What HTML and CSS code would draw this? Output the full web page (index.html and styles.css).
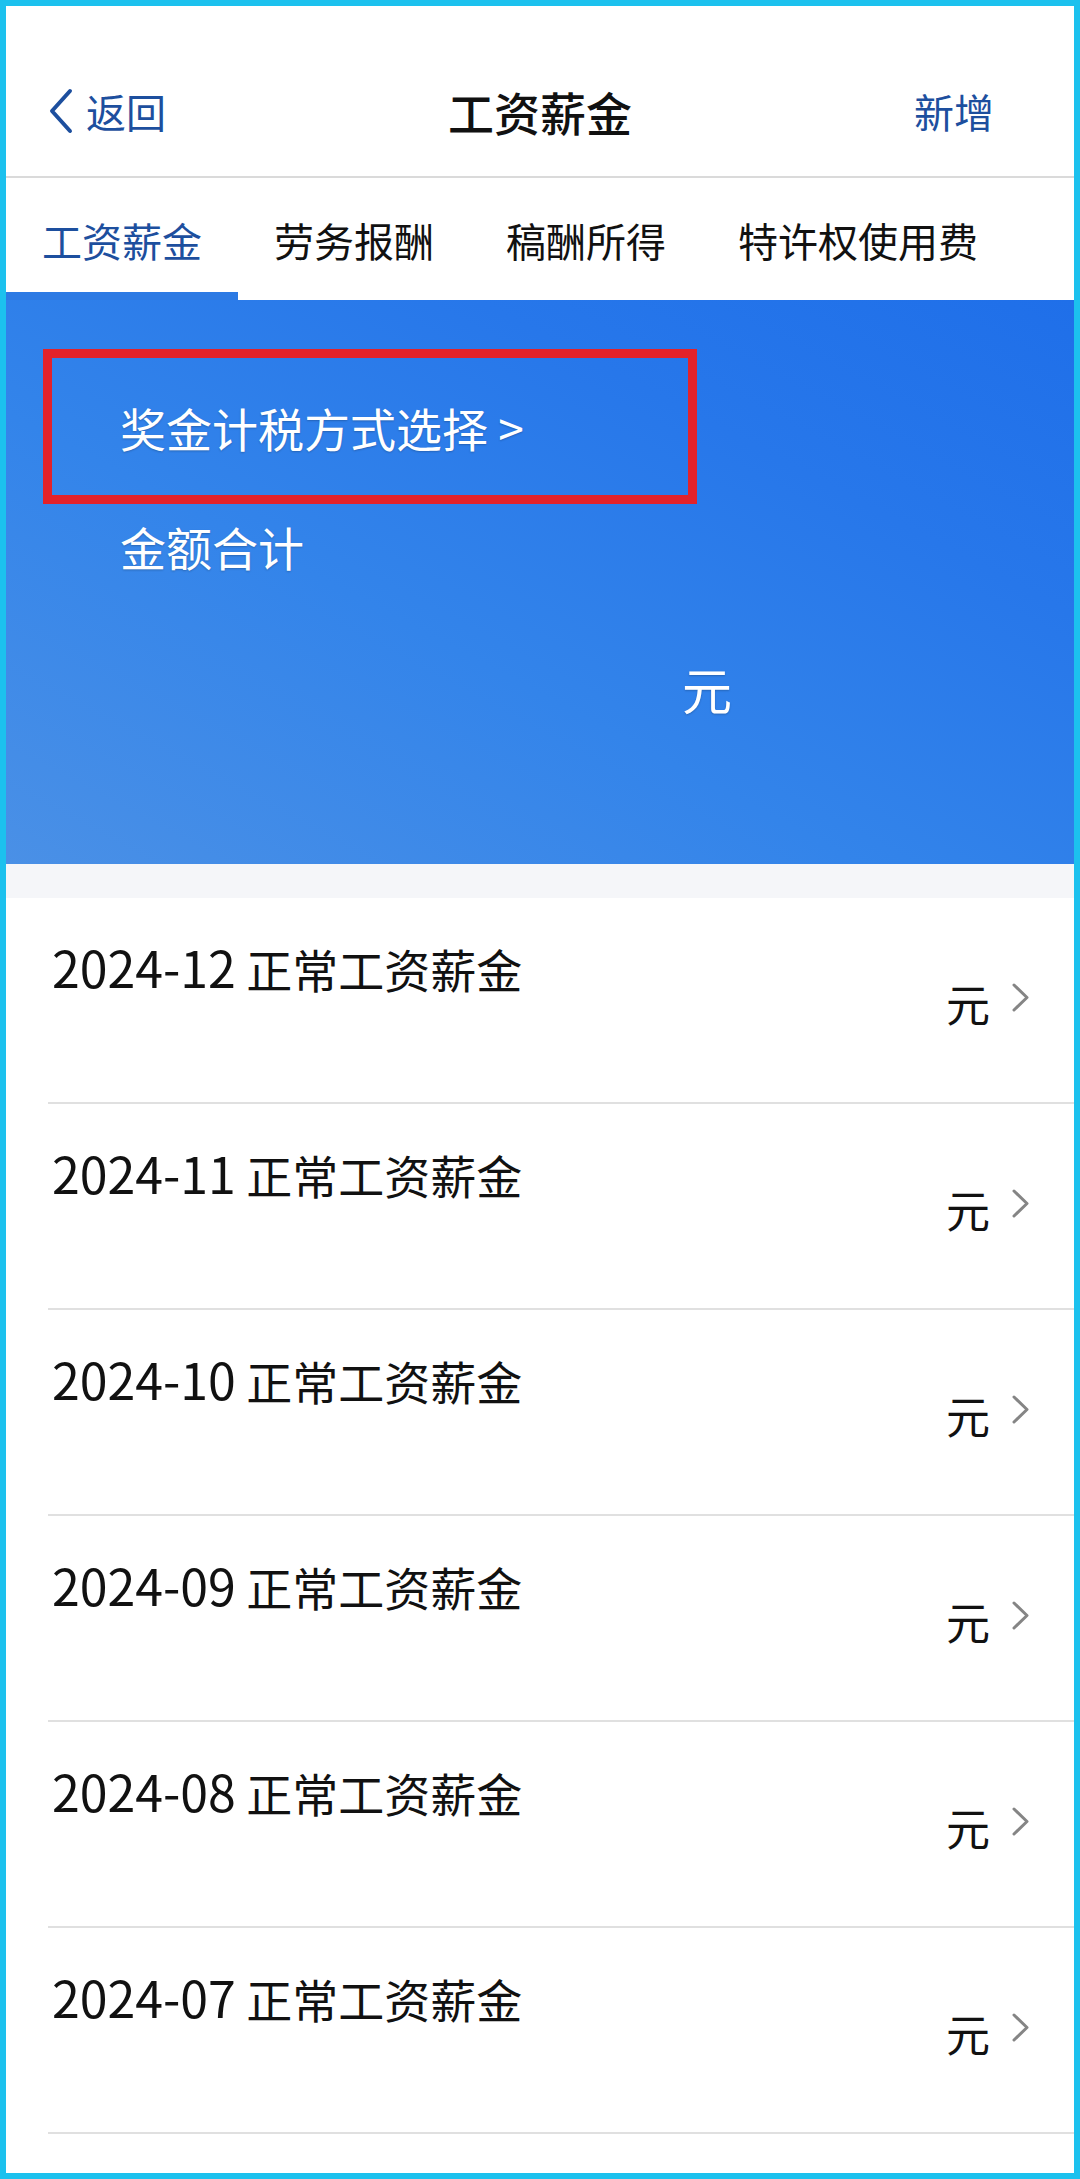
FILE: index.html
```html
<!DOCTYPE html>
<html>
<head>
    <meta charset="utf-8">
    <title>工资薪金</title>
    <link rel="stylesheet" href="styles.css">
</head>
<body>
    <div class="screen">
        <header class="nav">
            <div class="nav-left">
                <svg class="back-icon" width="26" height="46" viewBox="0 0 26 46">
                    <polyline points="22,3 4,23 22,43" fill="none" stroke="#1d4f9e" stroke-width="4" stroke-linecap="round" stroke-linejoin="round"/>
                </svg>
                <span>返回</span>
            </div>
            <div class="nav-title">工资薪金</div>
            <div class="nav-right"><span>新增</span></div>
        </header>

        <nav class="tabs">
            <div class="tab active">工资薪金</div>
            <div class="tab">劳务报酬</div>
            <div class="tab">稿酬所得</div>
            <div class="tab">特许权使用费</div>
        </nav>

        <section class="banner">
            <div class="bonus-box">
                <span class="bonus-link">奖金计税方式选择 &gt;</span>
            </div>
            <div class="total-label">金额合计</div>
            <div class="total-amount">元</div>
        </section>

        <div class="gap-band"></div>

        <ul class="salary-list">
            <li class="salary-row">
                <div class="row-title"><span class="row-date">2024-12</span> 正常工资薪金</div>
                <div class="row-amount">
                    <span>元</span>
                    <svg class="row-arrow" width="17" height="29" viewBox="0 0 17 29"><polyline points="2,2 15,14.5 2,27" fill="none" stroke="#858585" stroke-width="3" stroke-linecap="round" stroke-linejoin="round"/></svg>
                </div>
            </li>
            <li class="salary-row">
                <div class="row-title"><span class="row-date">2024-11</span> 正常工资薪金</div>
                <div class="row-amount">
                    <span>元</span>
                    <svg class="row-arrow" width="17" height="29" viewBox="0 0 17 29"><polyline points="2,2 15,14.5 2,27" fill="none" stroke="#858585" stroke-width="3" stroke-linecap="round" stroke-linejoin="round"/></svg>
                </div>
            </li>
            <li class="salary-row">
                <div class="row-title"><span class="row-date">2024-10</span> 正常工资薪金</div>
                <div class="row-amount">
                    <span>元</span>
                    <svg class="row-arrow" width="17" height="29" viewBox="0 0 17 29"><polyline points="2,2 15,14.5 2,27" fill="none" stroke="#858585" stroke-width="3" stroke-linecap="round" stroke-linejoin="round"/></svg>
                </div>
            </li>
            <li class="salary-row">
                <div class="row-title"><span class="row-date">2024-09</span> 正常工资薪金</div>
                <div class="row-amount">
                    <span>元</span>
                    <svg class="row-arrow" width="17" height="29" viewBox="0 0 17 29"><polyline points="2,2 15,14.5 2,27" fill="none" stroke="#858585" stroke-width="3" stroke-linecap="round" stroke-linejoin="round"/></svg>
                </div>
            </li>
            <li class="salary-row">
                <div class="row-title"><span class="row-date">2024-08</span> 正常工资薪金</div>
                <div class="row-amount">
                    <span>元</span>
                    <svg class="row-arrow" width="17" height="29" viewBox="0 0 17 29"><polyline points="2,2 15,14.5 2,27" fill="none" stroke="#858585" stroke-width="3" stroke-linecap="round" stroke-linejoin="round"/></svg>
                </div>
            </li>
            <li class="salary-row">
                <div class="row-title"><span class="row-date">2024-07</span> 正常工资薪金</div>
                <div class="row-amount">
                    <span>元</span>
                    <svg class="row-arrow" width="17" height="29" viewBox="0 0 17 29"><polyline points="2,2 15,14.5 2,27" fill="none" stroke="#858585" stroke-width="3" stroke-linecap="round" stroke-linejoin="round"/></svg>
                </div>
            </li>
        </ul>
    </div>
</body>
</html>
```

FILE: styles.css
```css
* {
    box-sizing: border-box;
}
body {
    margin: 0;
    font-family: "Noto Sans CJK SC", "Noto Sans", sans-serif;
    color: #111;
    background: #fff;
}
.screen {
    width: 1080px;
    height: 2179px;
    border: 6px solid #1cc1ee;
    background-color: #fff;
    overflow: hidden;
}

/* top nav */
.nav {
    display: flex;
    align-items: center;
    height: 172px;
    padding: 40px 42px 0 42px;
    border-bottom: 2px solid #dadada;
}
.nav-left {
    flex: 1;
    display: flex;
    align-items: center;
    gap: 12px;
    font-size: 40px;
    color: #1d4f9e;
}
.nav-left span {
    line-height: 46px;
}
.nav-title {
    font-size: 46px;
    font-weight: 500;
    color: #111;
}
.nav-right {
    flex: 1;
    text-align: right;
    font-size: 40px;
    color: #1d4f9e;
}
.nav-right span {
    margin-right: 38px;
}

/* tabs */
.tabs {
    display: flex;
    background-color: #fff;
}
.tab {
    padding: 42px 36px 32px;
    font-size: 40px;
    line-height: 40px;
    color: #111;
    border-bottom: 8px solid #fff;
    white-space: nowrap;
}
.tab.active {
    color: #1d4f9e;
    border-bottom-color: #2c7ae4;
}

/* blue summary */
.banner {
    height: 564px;
    padding: 49px 0 0 37px;
    background: linear-gradient(to top right, #4a90e6 0%, #3384ea 40%, #2777ea 72%, #1f6fe9 100%);
    color: #fff;
    text-shadow: 0 1px 2px rgba(0, 0, 0, 0.22);
}
.bonus-box {
    display: flex;
    align-items: center;
    width: 654px;
    height: 155px;
    padding-left: 68px;
    border: 9px solid #e3222a;
    font-size: 46px;
}
.total-label {
    margin: 19px 0 0 77px;
    font-size: 46px;
    line-height: 46px;
}
.total-amount {
    margin: 94px 0 0 639px;
    font-size: 50px;
    line-height: 50px;
}

.gap-band {
    height: 34px;
    background-color: #f5f6f9;
}

/* list */
.salary-list {
    list-style: none;
    margin: 0;
    padding: 0;
}
.salary-row {
    display: flex;
    justify-content: space-between;
    align-items: flex-start;
    height: 206px;
    margin-left: 42px;
    padding: 0 45px 0 4px;
    border-bottom: 2px solid #e0e0e0;
}
.row-title {
    margin-top: 45px;
    font-size: 46px;
    line-height: 46px;
}
.row-date {
    font-size: 50px;
}
.row-amount {
    display: flex;
    align-items: flex-start;
    gap: 22px;
    margin-top: 83px;
    font-size: 44px;
    line-height: 44px;
}
.row-arrow {
    margin-top: 2px;
}
```
